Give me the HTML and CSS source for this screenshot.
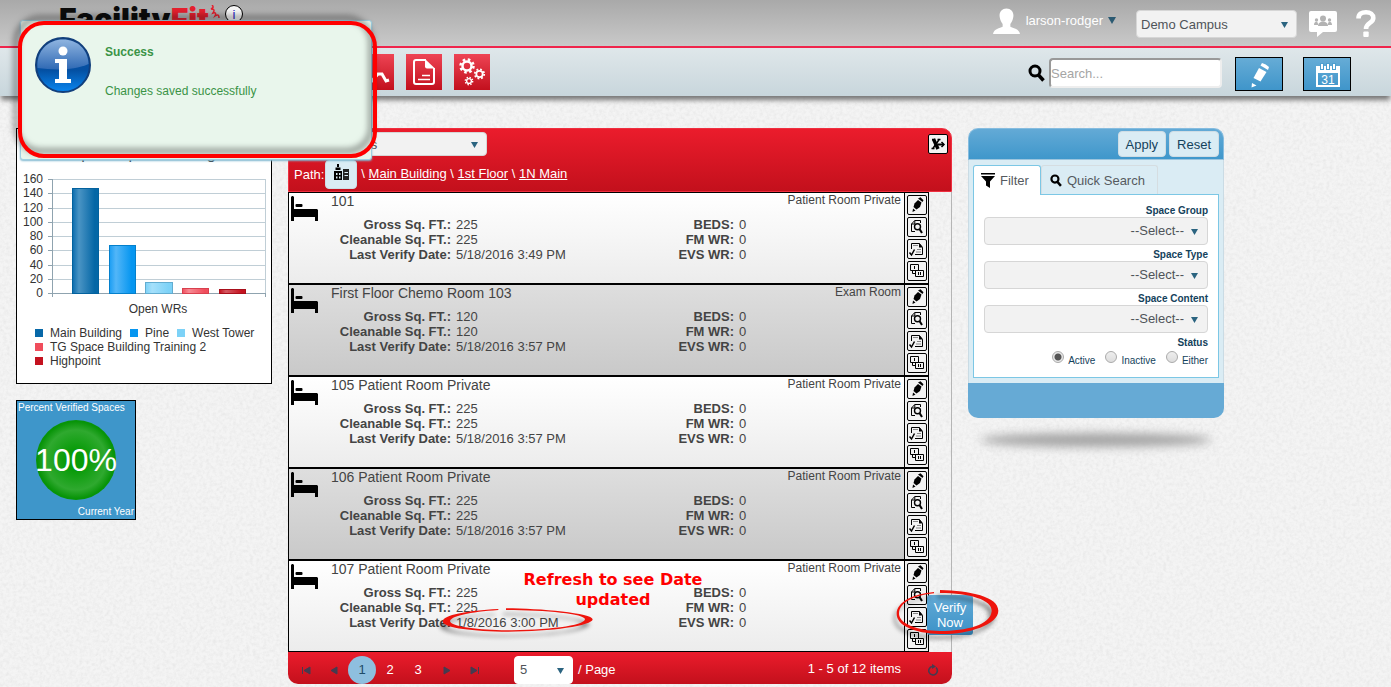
FILE: index.html
```html
<!DOCTYPE html>
<html lang="en">
<head>
<meta charset="utf-8">
<title>FacilityFit</title>
<link rel="stylesheet" href="styles.css">
</head>
<body>
<svg class="defs" aria-hidden="true">
  <defs>
    <linearGradient id="g-info" x1="0" y1="0" x2="0" y2="1"><stop offset="0" stop-color="#1a4f96"/><stop offset=".6" stop-color="#0450a3"/><stop offset="1" stop-color="#0a86f0"/></linearGradient>
    <linearGradient id="g-gloss" x1="0" y1="0" x2="0" y2="1"><stop offset="0" stop-color="#8fb4e0"/><stop offset="1" stop-color="#2f69b4"/></linearGradient>
    <linearGradient id="b1"><stop offset="0" stop-color="#0b6cae"/><stop offset=".25" stop-color="#4a94c4"/><stop offset=".85" stop-color="#0567a6"/></linearGradient>
    <linearGradient id="b2"><stop offset="0" stop-color="#1a9df3"/><stop offset=".25" stop-color="#52b6f8"/><stop offset=".85" stop-color="#0696f0"/></linearGradient>
    <linearGradient id="b3"><stop offset="0" stop-color="#7dd2f7"/><stop offset=".25" stop-color="#a5e0fb"/><stop offset=".85" stop-color="#7dd2f7"/></linearGradient>
    <linearGradient id="b4"><stop offset="0" stop-color="#f04d5c"/><stop offset=".25" stop-color="#f78b94"/><stop offset=".85" stop-color="#f04d5c"/></linearGradient>
    <linearGradient id="b5"><stop offset="0" stop-color="#c4121f"/><stop offset=".25" stop-color="#d55a63"/><stop offset=".85" stop-color="#c4121f"/></linearGradient>
    <filter id="grain" x="0" y="0" width="100%" height="100%">
      <feTurbulence type="fractalNoise" baseFrequency="0.3" numOctaves="4" seed="4"/>
      <feColorMatrix values="0 0 0 0 .5  0 0 0 0 .5  0 0 0 0 .5  .25 .25 0 0 -.2"/>
    </filter>
  </defs>
  <symbol id="i-bed" viewBox="0 0 27 26"><path d="M1 0h1l1 1v12h23l1 1v11h-3v-4H3v4H0V1z"/><rect x="4.500" y="8" width="7" height="3" rx="1"/></symbol>
  <symbol id="i-pencil" viewBox="0 0 18 18"><path d="M6.500 7.500L10 4l3.500 2.500-1.500 4.500-3.500 2.500-3-2.500z"/><path d="M10 2.500l2.500-1.300 3 3-1 1.800z"/><path d="M5 12.500l2.500 2-3 1.500z"/></symbol>
  <symbol id="i-find" viewBox="0 0 18 18"><path d="M12.500 5V2.500H6.800L3.500 6v7.500H7M6.800 2.500V6H3.500" fill="none" stroke="currentColor"/><circle cx="9.500" cy="8.800" r="3" fill="none" stroke="currentColor" stroke-width="1.400"/><path d="M11.500 11L14 15" stroke="currentColor" stroke-width="2"/></symbol>
  <symbol id="i-check" viewBox="0 0 18 18"><path d="M3.500 9V3.500h8l3 4v7H7" fill="none" stroke="currentColor"/><path d="M11 3v4.500h4z"/><path d="M5 5.500h5M9 9.500h4M8 12h5" stroke="#888"/><path d="M1.500 12.500l2 2.500L6.500 9.500" fill="none" stroke="currentColor" stroke-width="1.500"/></symbol>
  <symbol id="i-link" viewBox="0 0 18 18"><path d="M2.500 2.500h8v6h-8zM7.500 8.500h8v6h-8z" fill="#f3f3f3" stroke="currentColor"/><path d="M6.500 4v3M10.500 10v3M12.500 10v3M4.500 8.500v3h3" fill="none" stroke="currentColor"/></symbol>
  <symbol id="i-glass" viewBox="0 0 17 18"><circle cx="7" cy="7" r="5" fill="none" stroke="currentColor" stroke-width="3"/><path d="M10.500 11l5 5.500" stroke="currentColor" stroke-width="3.500"/></symbol>
</svg>
<svg class="paper" aria-hidden="true"><rect width="100%" height="100%" filter="url(#grain)"/></svg>

<header class="topbar">
  <a class="logo" href="#">Facility<span>Fit</span></a>
  <svg class="squiggle" width="13" height="14" viewBox="0 0 13 14"><path d="M3 0c2 2 1 3-1 4 3 0 4 1 2 4 3-1 3 1 2 3 3-2 4-1 4 2" fill="none" stroke="#e5202e" stroke-width="1.500"/></svg>
  <button class="about" type="button">i</button>
  <div class="account">
    <svg width="27" height="27" viewBox="0 0 28 27" fill="#fff"><path d="M14 0c5 0 8 4 7 9-.5 3-1.500 5-3 7v3c3 1.500 9 2 10 7.500H0C1 21 7 20.500 10 19v-3c-1.500-2-2.500-4-3-7-1-5 2-9 7-9z"/></svg>
    <button class="user" type="button">larson-rodger<span class="caret"></span></button>
  </div>
  <select class="campus" aria-label="Campus"><option>Demo Campus</option></select>
  <svg class="chat" width="28" height="26" viewBox="0 0 28 26"><path d="M2 0h24q2 0 2 2v17q0 2-2 2H14l-6 5v-5H2q-2 0-2-2V2q0-2 2-2z" fill="#fff"/><g fill="#b3b3b3"><circle cx="14" cy="7.500" r="3"/><path d="M9 15c0-6 10-6 10 0z"/><circle cx="7.500" cy="9" r="1.700"/><circle cx="20.500" cy="9" r="1.700"/><path d="M5 14c0-4 4-4 4-1v1zM23 14c0-4-4-4-4-1v1z"/></g></svg>
  <svg class="help" width="20" height="27" viewBox="0 0 20 27"><path d="M2.500 8.500C2.500 4 5.500 2.300 10 2.300s7.300 2 7.300 5.700c0 5.500-7.300 4.500-7.300 11" fill="none" stroke="#fff" stroke-width="4.600"/><rect x="7.300" y="21.500" width="5.400" height="5.500" rx="1" fill="#fff"/></svg>
</header>

<nav class="toolbar">
  <button class="tile" type="button" aria-label="Trends"><svg width="36" height="36" fill="none" stroke="#fff" stroke-width="3"><path d="M12 29l8-9h4l4 7 3-1"/></svg></button>
  <button class="tile" type="button" aria-label="Reports"><svg width="36" height="36" viewBox="0 0 36 36"><path d="M20 6H10q-2 0-2 2v20q0 2 2 2h16q2 0 2-2V14" fill="none" stroke="#fff" stroke-width="2"/><path d="M19 5l10 9.500h-8q-2 0-2-2z" fill="#fff"/><path d="M16 21.500h8M12 25.500h12" stroke="#fff" stroke-width="1.500"/></svg></button>
  <button class="tile" type="button" aria-label="Settings"><svg width="36" height="36" viewBox="0 0 36 36" fill="none" stroke="#fff"><circle cx="13" cy="12" r="4.500" stroke-width="2.500"/><circle cx="13" cy="12" r="6.500" stroke-width="2.500" stroke-dasharray="2.553"/><circle cx="25.500" cy="20" r="3.200" stroke-width="1.800"/><circle cx="25.500" cy="20" r="4.700" stroke-width="1.800" stroke-dasharray="1.846"/><circle cx="15" cy="27" r="2.400" stroke-width="1.400"/><circle cx="15" cy="27" r="3.700" stroke-width="1.400" stroke-dasharray="1.453"/></svg></button>
  <div class="search">
    <label for="q"><svg width="17" height="18" aria-label="Search"><use href="#i-glass"/></svg></label>
    <input id="q" type="text" placeholder="Search...">
  </div>
  <button class="action" type="button" aria-label="Edit"><svg width="46" height="32" viewBox="0 0 46 32" fill="#fff"><path d="M23 10l7.500 4-6 9.500-7-3.500z"/><path d="M24.500 7.500l1.500-2.500q4 1 7 4l-1 3z"/><path d="M16 25l4.500 2.500-5 2z"/></svg></button>
  <button class="action" type="button" aria-label="Calendar"><svg width="46" height="32" viewBox="0 0 46 32"><path d="M13 9h22v19H13z" fill="none" stroke="#fff" stroke-width="2"/><path d="M12 8h24v7H12z" fill="#fff"/><path d="M18 5v7M24 5v7M30 5v7" stroke="#4d9fcf" stroke-width="4"/><path d="M18 6v5M24 6v5M30 6v5" stroke="#fff" stroke-width="2"/><text x="24" y="26" text-anchor="middle">31</text></svg></button>
</nav>

<main class="page">
  <aside class="widgets">
    <section class="chart">
      <h2>Top Campus Buildings</h2>
      <svg class="plot" viewBox="0 0 254 150" role="img" aria-label="Open work requests by building">
        <path d="M31 13.500h217M31 27.500h217M31 42.500h217M31 56.500h217M31 70.500h217M31 84.500h217M31 99.500h217M31 113.500h217M248.500 13v114" stroke="#c0ced6" fill="none"/>
        <path d="M31 13.500h4M31 27.500h4M31 42.500h4M31 56.500h4M31 70.500h4M31 84.500h4M31 99.500h4M31 113.500h4M31 127.500h218M35.500 13v118M248.500 127v4" stroke="#8fa3af" fill="none"/>
        <rect x="55.500" y="22.500" width="26" height="105" fill="url(#b1)" stroke="#03629e"/>
        <rect x="92.500" y="79.500" width="26" height="48" fill="url(#b2)" stroke="#0480cc"/>
        <rect x="128.500" y="116.500" width="27" height="11" fill="url(#b3)" stroke="#62acd0"/>
        <rect x="165.500" y="122.500" width="26" height="5" fill="url(#b4)" stroke="#d8404e"/>
        <rect x="202.500" y="123.500" width="26" height="4" fill="url(#b5)" stroke="#a80f1b"/>
        <g text-anchor="end"><text x="26" y="17">160</text><text x="26" y="31">140</text><text x="26" y="46">120</text><text x="26" y="60">100</text><text x="26" y="74">80</text><text x="26" y="88">60</text><text x="26" y="103">40</text><text x="26" y="117">20</text><text x="26" y="131">0</text></g>
        <text x="141" y="147" text-anchor="middle">Open WRs</text>
      </svg>
      <ul class="legend">
        <li class="k1">Main Building</li><li class="k2">Pine</li><li class="k3">West Tower</li><li class="k4">TG Space Building Training 2</li><li class="k5">Highpoint</li>
      </ul>
    </section>
    <section class="percent">
      <span>Percent Verified Spaces</span>
      <strong>100%</strong>
      <span class="period">Current Year</span>
    </section>
  </aside>

  <section class="spaces">
    <header class="spaces-head">
      <div class="head-row">
        <select class="view" aria-label="View"><option>Patient Rooms</option></select>
        <button class="mini" type="button" aria-label="Export"><svg width="18" height="18" viewBox="0 0 18 18" fill="none" stroke="#000"><path d="M4.500 4l4.500 10" stroke-width="3.500"/><path d="M10.500 4L3.500 14M3 4.500h3M8.500 4.500h3M2.500 13.500h3" stroke-width="1.500"/><path d="M8.500 9.500h6" stroke-width="2"/><path d="M12.500 7l2.500 2.500-2.500 2.500" stroke-width="1.500"/></svg></button>
      </div>
      <div class="path">
        <span>Path:</span>
        <button class="root" type="button" aria-label="Campus"><svg width="16" height="17" viewBox="0 0 16 17"><path d="M1 7h8v9H1zM2.500 3.500h5V6h-5zM4 0h2v3H4z"/><path d="M10 5h6v11h-6z" fill="#222"/><path d="M3 9h1.500v2H3zM6 9h1.500v2H6zM3 12.500h1.500v2H3zM6 12.500h1.500v2H6zM11.500 8H15v1h-3.500zM11.500 11H15v1h-3.500z" fill="#daecf4"/></svg></button>
        <span class="crumbs">\ <a href="#">Main Building</a> \ <a href="#">1st Floor</a> \ <a href="#">1N Main</a></span>
      </div>
    </header>

    <div class="list">
      <article class="room">
        <svg class="bed"><use href="#i-bed"/></svg>
        <div class="info"><h3>101</h3><p>Patient Room Private</p>
          <dl><dt>Gross Sq. FT.:</dt><dd>225</dd><dt>Cleanable Sq. FT.:</dt><dd>225</dd><dt>Last Verify Date:</dt><dd>5/18/2016 3:49 PM</dd></dl>
          <dl><dt>BEDS:</dt><dd>0</dd><dt>FM WR:</dt><dd>0</dd><dt>EVS WR:</dt><dd>0</dd></dl></div>
        <div class="tools"><button class="mini" type="button" aria-label="Edit"><svg><use href="#i-pencil"/></svg></button><button class="mini" type="button" aria-label="View"><svg><use href="#i-find"/></svg></button><button class="mini" type="button" aria-label="Verify"><svg><use href="#i-check"/></svg></button><button class="mini" type="button" aria-label="Link"><svg><use href="#i-link"/></svg></button></div>
      </article>
      <article class="room">
        <svg class="bed"><use href="#i-bed"/></svg>
        <div class="info"><h3>First Floor Chemo Room 103</h3><p>Exam Room</p>
          <dl><dt>Gross Sq. FT.:</dt><dd>120</dd><dt>Cleanable Sq. FT.:</dt><dd>120</dd><dt>Last Verify Date:</dt><dd>5/18/2016 3:57 PM</dd></dl>
          <dl><dt>BEDS:</dt><dd>0</dd><dt>FM WR:</dt><dd>0</dd><dt>EVS WR:</dt><dd>0</dd></dl></div>
        <div class="tools"><button class="mini" type="button" aria-label="Edit"><svg><use href="#i-pencil"/></svg></button><button class="mini" type="button" aria-label="View"><svg><use href="#i-find"/></svg></button><button class="mini" type="button" aria-label="Verify"><svg><use href="#i-check"/></svg></button><button class="mini" type="button" aria-label="Link"><svg><use href="#i-link"/></svg></button></div>
      </article>
      <article class="room">
        <svg class="bed"><use href="#i-bed"/></svg>
        <div class="info"><h3>105 Patient Room Private</h3><p>Patient Room Private</p>
          <dl><dt>Gross Sq. FT.:</dt><dd>225</dd><dt>Cleanable Sq. FT.:</dt><dd>225</dd><dt>Last Verify Date:</dt><dd>5/18/2016 3:57 PM</dd></dl>
          <dl><dt>BEDS:</dt><dd>0</dd><dt>FM WR:</dt><dd>0</dd><dt>EVS WR:</dt><dd>0</dd></dl></div>
        <div class="tools"><button class="mini" type="button" aria-label="Edit"><svg><use href="#i-pencil"/></svg></button><button class="mini" type="button" aria-label="View"><svg><use href="#i-find"/></svg></button><button class="mini" type="button" aria-label="Verify"><svg><use href="#i-check"/></svg></button><button class="mini" type="button" aria-label="Link"><svg><use href="#i-link"/></svg></button></div>
      </article>
      <article class="room">
        <svg class="bed"><use href="#i-bed"/></svg>
        <div class="info"><h3>106 Patient Room Private</h3><p>Patient Room Private</p>
          <dl><dt>Gross Sq. FT.:</dt><dd>225</dd><dt>Cleanable Sq. FT.:</dt><dd>225</dd><dt>Last Verify Date:</dt><dd>5/18/2016 3:57 PM</dd></dl>
          <dl><dt>BEDS:</dt><dd>0</dd><dt>FM WR:</dt><dd>0</dd><dt>EVS WR:</dt><dd>0</dd></dl></div>
        <div class="tools"><button class="mini" type="button" aria-label="Edit"><svg><use href="#i-pencil"/></svg></button><button class="mini" type="button" aria-label="View"><svg><use href="#i-find"/></svg></button><button class="mini" type="button" aria-label="Verify"><svg><use href="#i-check"/></svg></button><button class="mini" type="button" aria-label="Link"><svg><use href="#i-link"/></svg></button></div>
      </article>
      <article class="room">
        <svg class="bed"><use href="#i-bed"/></svg>
        <div class="info"><h3>107 Patient Room Private</h3><p>Patient Room Private</p>
          <dl><dt>Gross Sq. FT.:</dt><dd>225</dd><dt>Cleanable Sq. FT.:</dt><dd>225</dd><dt>Last Verify Date:</dt><dd>1/8/2016 3:00 PM</dd></dl>
          <dl><dt>BEDS:</dt><dd>0</dd><dt>FM WR:</dt><dd>0</dd><dt>EVS WR:</dt><dd>0</dd></dl></div>
        <div class="tools"><button class="mini" type="button" aria-label="Edit"><svg><use href="#i-pencil"/></svg></button><button class="mini" type="button" aria-label="View"><svg><use href="#i-find"/></svg></button><button class="mini" type="button" aria-label="Verify"><svg><use href="#i-check"/></svg></button><button class="mini" type="button" aria-label="Link"><svg><use href="#i-link"/></svg></button></div>
        <div class="tip">Verify Now</div>
        <p class="callout">Refresh to see Date updated</p>
        <svg class="ring ring-date" viewBox="480 168 465 84"><path d="M678 175C780 175 938 190 938 208C938 228 800 247 665 245C560 243 488 232 488 214C490 195 560 182 655 177L655 180C570 186 512 198 510 214C512 228 580 239 665 241C800 241 912 228 915 208C915 192 800 180 678 180Z"/></svg>
        <svg class="ring ring-tip" viewBox="825 114 315 141"><path d="M960 120C1050 122 1135 140 1135 182C1135 225 1040 254 960 252C880 250 830 225 830 192C830 155 880 132 942 126L942 130C880 137 837 158 837 192C839 221 890 242 960 243C1040 243 1112 225 1115 183C1117 150 1050 129 960 129Z"/></svg>
      </article>
    </div>

    <footer class="pager">
      <button type="button" aria-label="First page"><svg width="10" height="9"><path d="M1.500 1v7M9 1L3 4.500 9 8z"/></svg></button>
      <button type="button" aria-label="Previous page"><svg width="10" height="9"><path d="M8 1L2 4.500 8 8z"/></svg></button>
      <button type="button" class="current">1</button>
      <button type="button">2</button>
      <button type="button">3</button>
      <button type="button" aria-label="Next page"><svg width="10" height="9"><path d="M3 1l6 3.500L3 8z"/></svg></button>
      <button type="button" aria-label="Last page"><svg width="10" height="9"><path d="M9.500 1v7M2 1l6 3.500L2 8z"/></svg></button>
      <select id="size" class="size"><option>5</option></select>
      <label for="size">/ Page</label>
      <span class="total">1 - 5 of 12 items</span>
      <button type="button" aria-label="Refresh"><svg width="12" height="12" viewBox="0 0 12 12"><path d="M9 3.500a4.300 4.300 0 1 1-4-1" fill="none" stroke-width="1.600"/><path d="M5 0l4 2.500L5 5z" stroke="none"/></svg></button>
    </footer>
  </section>

  <aside class="side">
    <form class="filter">
      <div class="filter-head"><button type="button">Apply</button><button type="button">Reset</button></div>
      <div class="filter-body">
        <div class="tabs">
          <button type="button" class="tab on"><svg width="14" height="16" viewBox="0 0 14 16"><path d="M0 0h14v1.500H0zM0 3h14L9 8.500V15l-4-2.500v-4z"/></svg>Filter</button>
          <button type="button" class="tab"><svg width="12" height="13"><use href="#i-glass"/></svg>Quick Search</button>
        </div>
        <div class="pane">
          <label for="grp">Space Group</label>
          <select id="grp"><option>--Select--</option></select>
          <label for="typ">Space Type</label>
          <select id="typ"><option>--Select--</option></select>
          <label for="cnt">Space Content</label>
          <select id="cnt"><option>--Select--</option></select>
          <fieldset>
            <legend>Status</legend>
            <div class="radios">
              <label><input type="radio" name="status" checked>Active</label>
              <label><input type="radio" name="status">Inactive</label>
              <label><input type="radio" name="status">Either</label>
            </div>
          </fieldset>
        </div>
      </div>
      <div class="filter-foot"></div>
    </form>
    <div class="ground"></div>
  </aside>
</main>

<div class="toast" role="status">
  <svg width="56" height="56" viewBox="0 0 56 56"><circle cx="28" cy="28" r="27" fill="url(#g-info)" stroke="#123f7c" stroke-width="2"/><path d="M2.500 31C1 13 14 2.500 28 2.500S53 12 53.500 27C38 34 18 33 2.500 31z" fill="url(#g-gloss)"/><g fill="#fff"><circle cx="28" cy="14" r="4.500"/><path d="M20 22h12v20h4v4H20v-4h4V26h-4z"/></g></svg>
  <div><strong>Success</strong><p>Changes saved successfully</p></div>
  <span class="frame"></span>
</div>
</body>
</html>
```
FILE: styles.css
```css
* { box-sizing: border-box; }
body {
  margin: 0;
  min-height: 100vh;
  overflow: hidden;
  position: relative;
  background: #f4f4f4;
  color: #444;
  font: 13px/15px "Liberation Sans", Arial, sans-serif;
}
button, select, input { font: inherit; color: inherit; margin: 0; }
button { padding: 0; border: 0; background: none; cursor: pointer; }
h2, h3, p, dl, dd, ul, fieldset { margin: 0; padding: 0; border: 0; }
svg { display: block; }
.defs { position: absolute; width: 0; height: 0; }
.paper { position: absolute; inset: 0; width: 100%; height: 100%; z-index: -1; }

select {
  appearance: none;
  border: 1px solid #d6d6d6;
  border-radius: 4px;
  color: #4f5459;
  background: #f2f2f2 url("data:image/svg+xml,%3Csvg xmlns='http://www.w3.org/2000/svg' width='7' height='8'%3E%3Cpath d='M0 2h7L3.5 8z' fill='%232b6480'/%3E%3C/svg%3E") no-repeat right 8px center;
}

/* Top bar */
.topbar {
  display: flex;
  align-items: flex-start;
  height: 48px;
  padding: 0 15px 0 59px;
  border-bottom: 2px solid #f0254c;
  background: linear-gradient(#a9a9a9, #c9c9c9);
}
.logo { color: #0c0c0c; font: 900 30px/38px Inter, "Open Sans", sans-serif; text-decoration: none; }
.logo span { color: #e5202e; }
.squiggle { margin-top: 5px; }
.about {
  width: 18px;
  height: 18px;
  margin: 5px 0 0 3px;
  border: 1px solid #000;
  border-radius: 50%;
  background: #f6f6f6;
  color: #2a21c8;
}
.account { display: flex; align-items: center; gap: 6px; height: 28px; margin: 7px 20px 0 auto; }
.user { display: flex; align-items: center; gap: 5px; margin-bottom: 2px; color: #fff; }
.caret { border: 4px solid transparent; border-top: 7px solid #2b5a72; border-bottom: 0; }
.campus { width: 161px; height: 28px; margin: 10px 12px 0 0; padding: 0 4px; }
.chat { margin: 11px 19px 0 0; }
.help { margin-top: 10px; }

/* Toolbar */
.toolbar {
  position: relative;
  display: flex;
  align-items: center;
  height: 48px;
  padding: 0 40px 0 358px;
  background: linear-gradient(#dfe7ea, #c8d6dc);
  box-shadow: 0 5px 5px -1px #777;
}
.tile { margin: 0 12px 0 0; background: linear-gradient(#ee4454, #c2101d); }
.search { display: flex; align-items: center; gap: 4px; margin: 2px 13px 0 auto; color: #000; }
.search input {
  width: 173px;
  height: 30px;
  padding: 0;
  border: 2px solid #eee;
  border-color: #999 #eee #eee #999;
  border-radius: 4px;
  background: #fff;
}
.search input::placeholder { color: #a5a5a5; }
.action { margin: 4px 20px 0 0; border: 1px solid #000; background: linear-gradient(#66acd6, #3f95ca); }
.action:last-child { margin-right: 0; }
.action text { fill: #fff; font-size: 12px; }

/* Page columns */
.page {
  display: grid;
  grid-template-columns: 256px minmax(0, 664px) 256px;
  align-items: start;
  gap: 16px;
  padding: 32px 16px 0;
}
.widgets { display: grid; gap: 16px; }
.chart { height: 256px; padding-top: 15px; border: 1px solid #000; background: #fff; color: #333; }
.chart h2 { margin-bottom: 3px; font: 16px/19px "Liberation Sans", Arial, sans-serif; text-align: center; }
.plot { width: 100%; }
.plot text { fill: #333; font-size: 12px; }
.legend { display: flex; flex-wrap: wrap; margin-left: 18px; padding-top: 10px; font-size: 12px; line-height: 14px; list-style: none; }
.legend li { display: flex; align-items: center; gap: 7px; margin-right: 8px; }
.legend li::before { content: ""; width: 8px; height: 8px; background: #0768a8; }
.legend .k2::before { background: #0696f0; }
.legend .k3::before { background: #7dd2f7; }
.legend .k4::before { background: #f04d5c; }
.legend .k5::before { background: #c4121f; }
.percent {
  display: flex;
  flex-direction: column;
  justify-content: space-between;
  width: 120px;
  height: 120px;
  padding: 1px;
  border: 1px solid #000;
  background: #3e96ca;
  color: #fff;
  font-size: 10px;
  line-height: 12px;
}
.percent strong {
  align-self: center;
  display: flex;
  align-items: center;
  justify-content: center;
  width: 80px;
  height: 80px;
  border-radius: 50%;
  background: radial-gradient(circle closest-side, #089b08 25%, #2fa92f 75%, #089408 96%);
  font-size: 32px;
  font-weight: 400;
}
.period { text-align: right; }

/* Space list */
.spaces-head {
  padding: 3px 3px 2px 2px;
  border: 1px solid #ef2f40;
  border-radius: 10px 10px 0 0;
  height: 64px;
  background: linear-gradient(#eb1c2c, #c3101c);
}
.head-row { display: flex; align-items: center; justify-content: space-between; height: 24px; }
.view { width: 196px; height: 24px; padding: 0; }
.path { display: flex; align-items: center; gap: 1px; margin-left: 3px; padding-top: 4px; color: #fff; }
.path a { color: #fff; }
.root { display: flex; justify-content: center; padding: 3px 0 9px; width: 32px; height: 29px; border: 1px solid #cddfe7; border-radius: 4px; background: #daecf4; }
.crumbs { padding: 0 0 2px 3px; }
.mini {
  flex: none;
  width: 20px;
  height: 20px;
  border: 1px solid #000;
  border-radius: 2px;
  background: #f3f3f3;
  color: #000;
}
.mini svg { width: 18px; height: 18px; }
.list { padding-right: 22px; border-right: 1px solid #b5b5b5; }
.room { position: relative; display: flex; border: 1px solid #000; background: linear-gradient(#fff, #ececec); }
.room:nth-child(even) { background: linear-gradient(#dedede, #c9c9c9); }
.bed { flex: none; width: 27px; height: 26px; margin: 3px 13px 0 2px; fill: #000; }
.info {
  flex: 1;
  display: grid;
  grid-template-columns: 1fr 1fr;
  grid-template-rows: 24px auto;
  padding-right: 3px;
}
.info h3 { font-size: 14px; font-weight: 400; line-height: 17px; }
.info p { font-size: 12px; line-height: 14px; text-align: right; }
.info dl { display: grid; grid-template-columns: 120px 1fr; column-gap: 5px; align-content: start; }
.info dl:last-child { grid-template-columns: 118px 1fr; }
.info dt { font-weight: 700; text-align: right; }
.info h3, .info p { white-space: nowrap; }
.tools { display: grid; gap: 2px; padding: 2px 1px 2px 2px; border-left: 1px solid #000; background: #f0f0f0; }
.tip {
  position: absolute;
  top: 34px;
  right: -45px;
  width: 46px;
  padding: 5px;
  border-radius: 3px;
  background: linear-gradient(#63aad5, #3c92c8);
  color: #fff;
  text-align: center;
}
.callout {
  position: absolute;
  top: 9px;
  left: 220px;
  width: 208px;
  color: #f00;
  font: 700 16px/20px "DejaVu Sans", Verdana, sans-serif;
  text-align: center;
}
.ring { position: absolute; fill: #ee140c; overflow: visible; filter: drop-shadow(-3px 5px 2px rgba(0, 0, 0, .4)); }
.ring-date { top: 45px; left: 151px; width: 155px; height: 28px; }
.ring-tip { top: 27px; right: -72px; width: 105px; height: 47px; }

/* Pager */
.pager {
  display: flex;
  align-items: flex-end;
  height: 32px;
  padding-left: 4px;
  border-radius: 0 0 10px 10px;
  background: linear-gradient(#eb1c2c, #c3101c);
  color: #fff;
  line-height: 28px;
}
.pager button { display: grid; place-items: center; width: 28px; height: 28px; border-radius: 50%; }
.pager svg { fill: #2d4258; stroke: #2d4258; opacity: .85; }
.pager .current { background: #8ebfdf; color: #1f4c68; }
.size { width: 59px; height: 28px; margin: 0 5px 0 26px; padding: 0 5px; border-color: #fff; background-color: #fff; line-height: 20px; }
.pager .total { margin: 0 18px 1px auto; }
.pager .total + button { margin-right: 5px; }

/* Filter */
.filter { color: #14425c; }
.filter-head {
  display: flex;
  justify-content: flex-end;
  gap: 3px;
  padding: 2px 4px;
  border: 1px solid #86bcdf;
  border-bottom-color: #9cc5de;
  border-radius: 10px 10px 0 0;
  background: linear-gradient(#63aad6, #3f97cb);
}
.filter-head button { height: 26px; padding: 0 7px; border: 1px solid #cfdde5; border-radius: 4px; background: #daecf4; }
.filter-body { padding: 5px 4px; border: 1px solid #cadbe4; border-width: 0 1px; background: #daecf4; }
.tabs { display: flex; }
.tab {
  display: flex;
  align-items: center;
  gap: 5px;
  height: 29px;
  padding: 0 12px 0 8px;
  border: 1px solid #d5dde1;
  border-bottom: 0;
  border-radius: 3px 3px 0 0;
  color: #555a5f;
  fill: #000;
}
.tab svg { color: #000; }
.tab.on { position: relative; height: 30px; margin-bottom: -1px; padding: 0 11px 0 7px; border-color: #7cc7e5; background: #fff; }
.pane {
  display: grid;
  padding: 10px;
  border: 1px solid #7cc7e5;
  background: #fff;
  font-size: 10px;
  line-height: 12px;
}
.pane > label, .pane legend { font-weight: 700; text-align: right; }
.pane select { height: 28px; margin-bottom: 4px; padding: 0 23px 0 0; background-position: right 9px center; font-size: 13px; text-align-last: right; }
.pane legend { width: 100%; padding: 0; }
.radios { display: flex; justify-content: flex-end; gap: 10px; padding-top: 2px; }
.radios label { display: flex; align-items: flex-end; gap: 4px; }
.radios input {
  appearance: none;
  width: 12px;
  height: 12px;
  margin: 0 0 4px;
  border: 1px solid #aaa;
  border-radius: 50%;
  background: linear-gradient(#eee, #ddd);
}
.radios input:checked { background: radial-gradient(circle, #555 3px, #e8e8e8 4px); }
.filter-foot { height: 35px; border-radius: 0 0 10px 10px; background: #66aad5; }
.ground { height: 14px; margin: 15px 12px 0; border-radius: 50%; background: #a4a4a4; filter: blur(5px); }

/* Notification */
.toast {
  position: absolute;
  top: 20px;
  left: 20px;
  width: 352px;
  height: 140px;
  display: flex;
  gap: 14px;
  padding: 16px 14px;
  border: 1px solid #9fd0e2;
  border-radius: 3px;
  background: #e9f6ec;
  box-shadow: 0 1px 2px #7fb8d0;
  color: #3a9346;
  font-size: 12px;
}
.toast strong { display: block; margin: 8px 0 24px; }
.frame {
  position: absolute;
  inset: 0 -6px 1px -3px;
  border: 4px solid #f00;
  border-radius: 26px;
  filter: drop-shadow(-4px -5px 3px rgba(0, 0, 0, .5));
}
```
